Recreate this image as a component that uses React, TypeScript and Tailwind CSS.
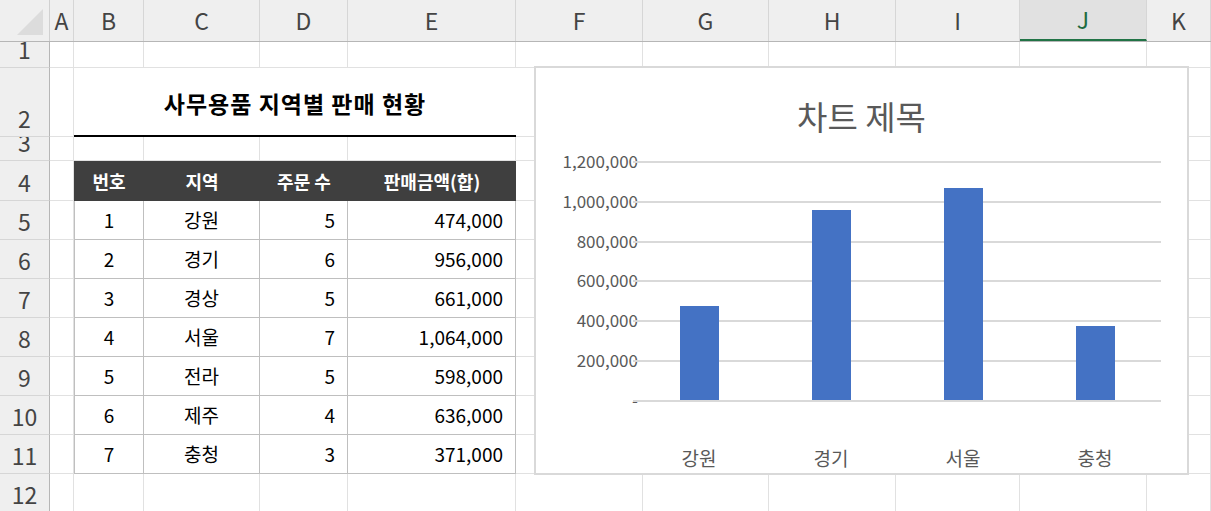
import React from "react";

const cols = [
  { n: "A", w: 24 }, { n: "B", w: 70 }, { n: "C", w: 116 }, { n: "D", w: 88 }, { n: "E", w: 168 },
  { n: "F", w: 127 }, { n: "G", w: 126 }, { n: "H", w: 127 }, { n: "I", w: 124 }, { n: "J", w: 127 }, { n: "K", w: 64 },
];
const rows = [26, 69, 24, 40, 39, 39, 39, 39, 39, 39, 39, 39];
const data = [
  ["1", "강원", "5", "474,000"], ["2", "경기", "6", "956,000"], ["3", "경상", "5", "661,000"],
  ["4", "서울", "7", "1,064,000"], ["5", "전라", "5", "598,000"], ["6", "제주", "4", "636,000"],
  ["7", "충청", "3", "371,000"],
];
const font = { fontFamily: '"Noto Sans CJK KR", "Noto Sans", sans-serif' };

function Cell({ r, c }: { r: number; c: number }) {
  const w = cols[c].w;
  if (r === 1 && c >= 1 && c <= 4) {
    if (c === 1) return <div style={{ width: 70 + 116 + 88 + 168 }} className="shrink-0 border-b-2 border-black flex items-center justify-center text-[23px] font-bold tracking-[1px] pt-1">사무용품 지역별 판매 현황</div>;
    return null;
  }
  if (r === 3 && c >= 1 && c <= 4) {
    const t = ["번호", "지역", "주문 수", "판매금액(합)"][c - 1];
    return <div style={{ width: w }} className="shrink-0 bg-[#3f3f3f] text-white font-bold text-[18px] flex items-center justify-center">{t}</div>;
  }
  if (r >= 4 && r <= 10 && c >= 1 && c <= 4) {
    const t = data[r - 4][c - 1];
    const al = c <= 2 ? "justify-center" : "justify-end pr-3";
    return <div style={{ width: w }} className={`shrink-0 border-r border-b border-[#bfbfbf] flex items-center text-[19px] ${al} ${c === 1 ? "border-l" : ""}`}>{t}</div>;
  }
  return <div style={{ width: w }} className="shrink-0 border-r border-b border-[#e1e1e1]"></div>;
}

const ticks = ["1,200,000", "1,000,000", "800,000", "600,000", "400,000", "200,000", "-"];
const bars = [["강원", 474000], ["경기", 956000], ["서울", 1064000], ["충청", 371000]] as const;

function Chart() {
  return (
    <div className="absolute left-[534px] top-[66px] w-[655px] h-[409px] bg-white border-2 border-[#d9d9d9] flex flex-col">
      <div className="text-center text-[33px] text-[#595959] mt-[20px] h-[56px] leading-[56px]">차트 제목</div>
      <div className="flex mt-[17px] pr-[26px]">
        <div className="w-[103px] flex flex-col">
          {ticks.map((t) => (
            <div key={t} className="h-[39.8px] first:-mt-[10px] text-right text-[17px] text-[#595959] leading-[20px] pr-[1px]">{t}</div>
          ))}
        </div>
        <div className="relative flex-1 ml-[-6px] h-[241px]">
          <div className="absolute inset-0 flex flex-col">
            {ticks.map((t) => (
              <div key={t} className="h-[39.8px] shrink-0 border-t-2 border-[#d9d9d9]" />
            ))}
          </div>
          <div className="absolute inset-x-0 top-0 bottom-[2px] flex items-end">
            {bars.map(([n, v]) => (
              <div key={n} className="flex-1 flex justify-center">
                <div className="w-[39px] bg-[#4472c4]" style={{ height: (v / 1200000) * 238.8 }} />
              </div>
            ))}
          </div>
        </div>
      </div>
      <div className="flex pl-[97px] pr-[26px] mt-[14px]">
        {bars.map(([n]) => (
          <div key={n} className="flex-1 text-center text-[19px] text-[#595959]">{n}</div>
        ))}
      </div>
    </div>
  );
}

export default function App() {
  return (
    <div className="relative w-[1211px] h-[511px] overflow-hidden bg-white" style={font}>
      <div className="flex h-[42px] bg-[#efefef] border-b border-[#b6b6b6]">
        <div className="w-[50px] shrink-0 border-r border-[#d0d0d0] flex items-end justify-end p-[6px]">
          <div className="w-0 h-0 border-l-[26px] border-l-transparent border-b-[26px] border-b-[#dcdcdc]" />
        </div>
        {cols.map((c) => (
          <div key={c.n} style={{ width: c.w }} className={`shrink-0 flex items-center justify-center text-[23px] border-r border-[#d6d6d6] ${c.n === "J" ? "bg-[#e1e1e1] text-[#1e6b3f] border-b-2 border-b-[#217346]" : "text-[#444]"}`}>{c.n}</div>
        ))}
      </div>
      {rows.map((h, r) => (
        <div key={r} className="flex" style={{ height: h }}>
          <div className="w-[50px] shrink-0 bg-[#efefef] border-r border-[#b6b6b6] border-b border-b-[#d6d6d6] flex items-end justify-center text-[23px] text-[#444] overflow-hidden leading-[36px]">{r + 1}</div>
          {cols.map((_, c) => <Cell key={c} r={r} c={c} />)}
        </div>
      ))}
      <Chart />
    </div>
  );
}
